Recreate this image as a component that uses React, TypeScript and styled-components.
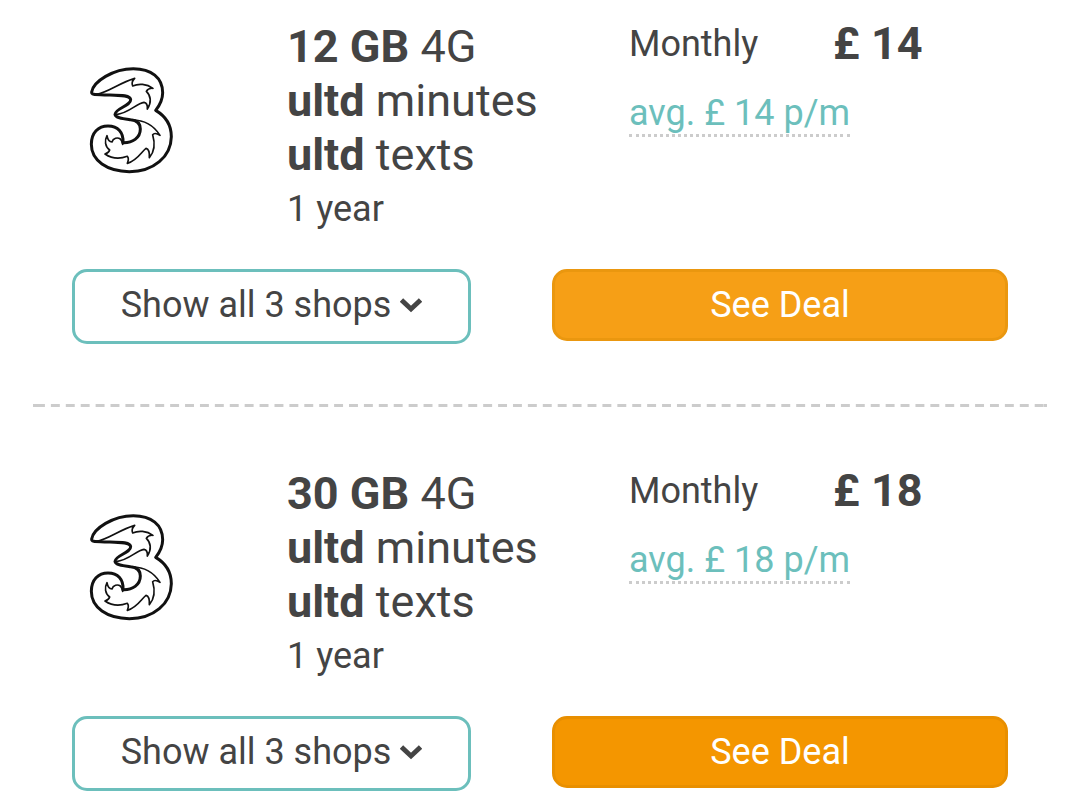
import React from "react";
import styled, { createGlobalStyle } from "styled-components";

const GlobalStyle = createGlobalStyle`
  *, *::before, *::after { box-sizing: border-box; }
  body {
    margin: 0;
    background: #fff;
    color: #444;
    font-family: Roboto, "Liberation Sans", sans-serif;
    font-size: 36px;
    line-height: 54px;
  }
`;

const DealList = styled.main`
  padding: 17px 33px 0;
`;

const DealItem = styled.article`
  padding: 0 39px 60px;

  /* wide dashes, evenly fitted between two solid ends */
  & + & {
    padding-top: 60px;
    background-image:
      linear-gradient(#ccc, #ccc),
      linear-gradient(#ccc, #ccc),
      linear-gradient(to right, transparent 20%, #ccc 20%, #ccc 80%, transparent 80%);
    background-position: left top, right top, left top;
    background-size: 3px 3px, 3px 3px, 15px 3px;
    background-repeat: no-repeat, no-repeat, round no-repeat;
  }

  &:last-child {
    padding-bottom: 16px;
  }
`;

const DealInfo = styled.div`
  display: grid;
  grid-template-columns: 215fr 342fr 379fr;
  align-items: start;
`;

const LogoCell = styled.div`
  padding: 43px 7px 0;
`;

const Logo = styled.svg`
  display: block;
  width: 104px;
  height: 124px;
`;

const Allowance = styled.ul`
  list-style: none;
  margin: 0;
  padding: 3px 0 0;
  white-space: nowrap;
`;

const AllowanceLine = styled.li<{ $small?: boolean }>`
  font-size: ${(p) => (p.$small ? "36px" : "45px")};
`;

const Pricing = styled.div`
  white-space: nowrap;
`;

const PriceRow = styled.div`
  display: grid;
  grid-template-columns: 204fr 175fr;
  margin-bottom: 15px;
`;

const Price = styled.strong`
  font-size: 45px;
`;

const AverageLink = styled.a`
  color: #6cbfbc;
  text-decoration: none;
  border-bottom: 3px dotted #ccc;
`;

const Actions = styled.div`
  display: grid;
  grid-template-columns: 399fr 456fr;
  column-gap: 81px;
  align-items: start;
  margin-top: 33px;
`;

const Button = styled.button`
  font: inherit;
  color: inherit;
  border: 3px solid;
  border-radius: 15px;
  padding: 6px 0;
  white-space: nowrap;
  cursor: pointer;
`;

const ShopsButton = styled(Button)`
  display: flex;
  align-items: center;
  justify-content: center;
  gap: 9px;
  padding-bottom: 9px;
  background: #fff;
  border-color: #6cbfbc;
`;

const DealButton = styled(Button)<{ $highlighted?: boolean }>`
  color: #fff;
  background: ${(p) => (p.$highlighted ? "#f69f16" : "#f49600")};
  border-color: ${(p) => (p.$highlighted ? "#ea970f" : "#e88f00")};
`;

const ThreeLogo = () => (
  <Logo viewBox="0 0 312 372" role="img" aria-label="Three" fill="none" stroke="#111" strokeLinejoin="round" strokeLinecap="round">
    <path
      strokeWidth="9"
      d="M38 96C43 64 103 26 163 26C217 26 251 53 251 98C251 122 241 137 230 151C259 168 277 195 277 230C276 290 224 335 151 335C84 334 37 302 37 253C37 218 58 198 87 198C117 198 134 218 132 248C160 249 184 234 184 207C184 190 174 181 155 179C132 176 109 174 108 163C108 146 156 137 155 119C154 103 116 106 65 104C47 104 37 104 38 96Z"
    />
    <g strokeWidth="5">
      <path d="M52 103C86 98 120 69 167 55C160 62 157 69 161 78C178 70 203 71 222 85C211 84 205 88 202 94C215 106 219 127 205 147C206 135 203 128 195 127C172 130 151 159 111 164" />
      <path d="M160 180C193 180 222 193 243 226C232 219 225 219 221 224C228 248 229 272 211 293C212 278 209 267 201 265C188 274 176 301 145 310C149 300 149 293 145 289C121 298 97 295 78 282C86 279 91 276 92 270C78 260 76 242 84 227C86 239 90 246 99 246C102 234 116 231 124 237C129 241 130 247 131 253" />
    </g>
  </Logo>
);

const Chevron = () => (
  <svg width="22" height="16" viewBox="0 0 22 16" fill="none" aria-hidden="true">
    <path d="M1.5 3L11 12L20.5 3" stroke="#444" strokeWidth="4.8" />
  </svg>
);

interface Deal {
  data: string;
  price: string;
  highlighted?: boolean;
}

const deals: Deal[] = [
  { data: "12 GB", price: "£ 14", highlighted: true },
  { data: "30 GB", price: "£ 18" },
];

export default function App() {
  return (
    <>
      <GlobalStyle />
      <DealList>
        {deals.map((deal) => (
          <DealItem key={deal.data}>
            <DealInfo>
              <LogoCell>
                <ThreeLogo />
              </LogoCell>
              <Allowance>
                <AllowanceLine><strong>{deal.data}</strong> 4G</AllowanceLine>
                <AllowanceLine><strong>ultd</strong> minutes</AllowanceLine>
                <AllowanceLine><strong>ultd</strong> texts</AllowanceLine>
                <AllowanceLine $small>1 year</AllowanceLine>
              </Allowance>
              <Pricing>
                <PriceRow>
                  <span>Monthly</span>
                  <Price>{deal.price}</Price>
                </PriceRow>
                <AverageLink href="#">avg. {deal.price} p/m</AverageLink>
              </Pricing>
            </DealInfo>
            <Actions>
              <ShopsButton type="button">
                Show all 3 shops
                <Chevron />
              </ShopsButton>
              <DealButton type="button" $highlighted={deal.highlighted}>See Deal</DealButton>
            </Actions>
          </DealItem>
        ))}
      </DealList>
    </>
  );
}
